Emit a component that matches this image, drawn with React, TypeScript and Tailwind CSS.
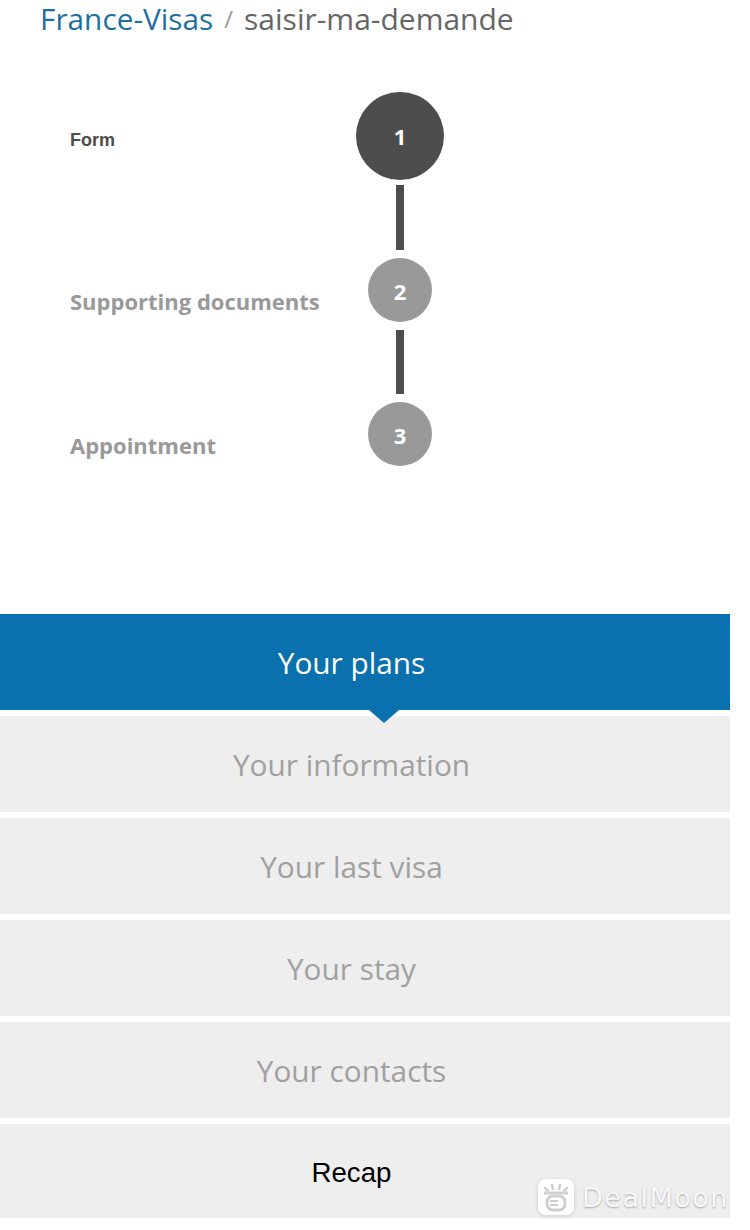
const openSans = { fontFamily: '"Open Sans", sans-serif' };

function Step({ n, label, active }: { n: number; label: string; active?: boolean }) {
  return (
    <div className="flex items-center">
      <div
        className={
          active
            ? 'w-[356px] shrink-0 pl-[70px] pt-2 font-["Liberation_Sans",sans-serif] text-[18px] font-bold text-[#4e4d4d]'
            : 'w-[356px] shrink-0 pl-[70px] pt-[22px] font-["Open_Sans",sans-serif] text-[22px] font-bold text-[#999999]'
        }
      >
        {label}
      </div>
      <div className="flex w-[88px] justify-center">
        <div
          className={
            active
              ? 'flex h-[88px] w-[88px] items-center justify-center rounded-full bg-[#4e4d4d] font-["Open_Sans",sans-serif] text-[22px] font-bold text-white'
              : 'flex h-16 w-16 items-center justify-center rounded-full bg-[#999999] pt-0.5 font-["Open_Sans",sans-serif] text-[22px] font-bold text-white'
          }
        >
          {n}
        </div>
      </div>
    </div>
  );
}

function Connector({ height, top }: { height: string; top: string }) {
  return (
    <div className={`ml-[356px] flex w-[88px] justify-center ${top}`}>
      <div className={`w-2 bg-[#4e4d4d] ${height}`} />
    </div>
  );
}

const tabs = ['Your information', 'Your last visa', 'Your stay', 'Your contacts'];

export default function App() {
  return (
    <div className="relative h-[1230px] w-[750px] overflow-hidden bg-white" style={openSans}>
      <div className="flex h-[40px] items-center pb-0.5 pl-10 text-[29.8px] leading-[38px]">
        <span className="text-[#1f6f9f]">France-Visas</span>
        <span className="mx-[11px] text-[24px] text-[#999999]">/</span>
        <span className="text-[30px] text-[#666666]">saisir-ma-demande</span>
      </div>

      <div className="mt-[52px]">
        <Step n={1} label="Form" active />
        <Connector top="mt-[5px]" height="h-[65px]" />
        <div className="mt-2">
          <Step n={2} label="Supporting documents" />
        </div>
        <Connector top="mt-2" height="h-16" />
        <div className="mt-2">
          <Step n={3} label="Appointment" />
        </div>
      </div>

      <div className="mt-[148px] flex w-[730px] flex-col gap-[6px]">
        <div className="relative flex h-24 items-center justify-center bg-[#0a70ae] pr-[27px] pt-0.5 text-[29.8px] text-white">
          Your plans
          <div className="absolute left-[369px] top-full z-10 h-0 w-0 border-x-[15px] border-t-[13px] border-x-transparent border-t-[#0a70ae]" />
        </div>
        {tabs.map((tab) => (
          <div key={tab} className="flex h-24 items-center justify-center bg-[#eeeeee] pr-[27px] pt-0.5 text-[29.8px] text-[#a0a0a0]">
            {tab}
          </div>
        ))}
        <div className="flex h-[94px] items-center justify-center bg-[#eeeeee] pr-[27px] pt-1 font-['Liberation_Sans',sans-serif] text-[27.7px] text-black">
          Recap
        </div>
      </div>

      {/* watermark */}
      <div className="absolute left-[538px] top-[1179px] flex items-center">
        <svg width="36" height="36" viewBox="0 0 36 36" className="shrink-0 drop-shadow-sm">
          <rect width="36" height="36" rx="8" fill="#ffffff" />
          <path d="M7 9l3 3M14 6l1 4M22 6l-1 4M29 9l-3 3" stroke="#cfcfcf" strokeWidth="2.5" strokeLinecap="round" />
          <path d="M6 14h24" stroke="#cfcfcf" strokeWidth="3" />
          <rect x="9" y="17" width="18" height="14" rx="6" fill="none" stroke="#cfcfcf" strokeWidth="3" />
          <path d="M12 22h8M12 26h8" stroke="#cfcfcf" strokeWidth="2" />
        </svg>
        <span className="ml-2 whitespace-nowrap font-['DejaVu_Sans',sans-serif] text-[27px] leading-none tracking-[1.5px] text-[#f8f8f8] [text-shadow:0_1px_2px_rgba(0,0,0,0.3)]">
          DealMoon
        </span>
      </div>
    </div>
  );
}
